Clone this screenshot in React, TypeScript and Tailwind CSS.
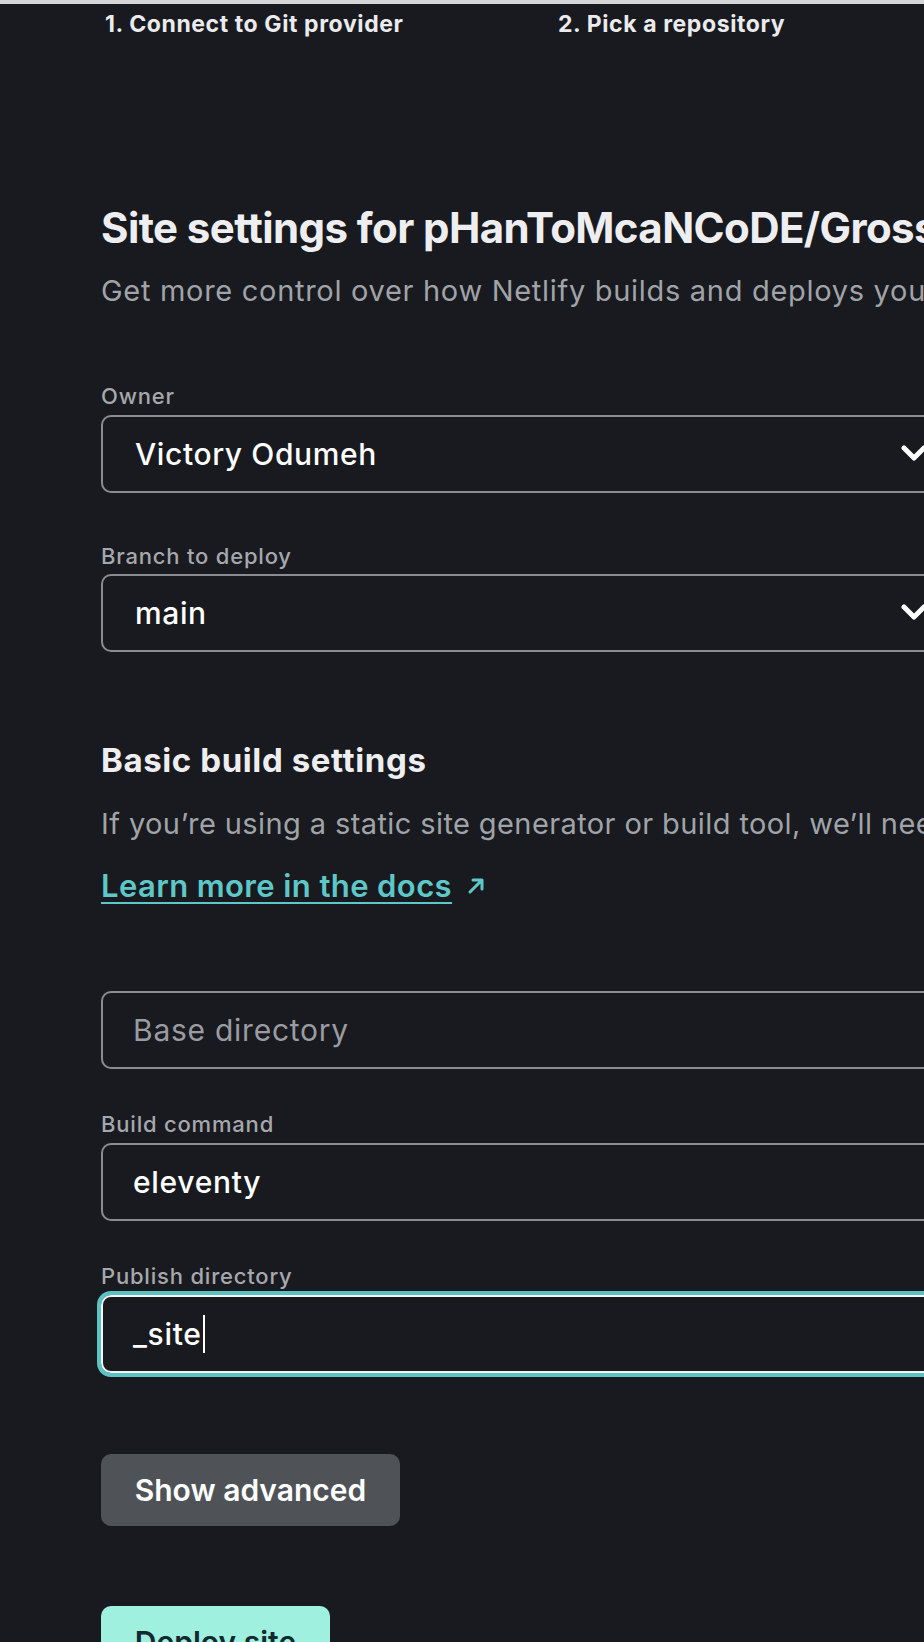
import { ReactNode } from "react";

const FONT = "font-['Inter','Liberation_Sans',sans-serif]";

function Chevron() {
  return (
    <svg width="26" height="18" viewBox="0 0 26 18" className="shrink-0">
      <polyline
        points="3,3 13,13 23,3"
        fill="none"
        stroke="#ffffff"
        strokeWidth="5"
        strokeLinecap="round"
        strokeLinejoin="round"
      />
    </svg>
  );
}

function FieldLabel({ children, className }: { children: ReactNode; className: string }) {
  return (
    <div className={`text-[22px] leading-[24px] font-medium tracking-[0.8px] text-[#a6a8ad] ${className}`}>
      {children}
    </div>
  );
}

function SelectBox({ value, className }: { value: string; className: string }) {
  return (
    <div
      className={`flex h-[78px] w-[860px] items-center justify-between rounded-[10px] border-2 border-[#8a8c91] pl-[32px] pr-[32px] ${className}`}
    >
      <span className="text-[30px] leading-[36px] font-medium tracking-[0.6px] text-white">{value}</span>
      <Chevron />
    </div>
  );
}

function TextBox({
  value,
  placeholder,
  focused,
  className,
}: {
  value?: string;
  placeholder?: string;
  focused?: boolean;
  className: string;
}) {
  const border = focused
    ? "border-2 border-[#f2f4f5] ring-4 ring-[#5cc3c4]"
    : "border-2 border-[#8a8c91]";
  return (
    <div className={`flex h-[78px] w-[860px] items-center rounded-[10px] pl-[30px] ${border} ${className}`}>
      {value ? (
        <span className="flex items-center text-[30px] leading-[36px] font-medium tracking-[0.7px] text-white">
          {value}
          {focused && <span className="ml-[1px] inline-block h-[38px] w-[2px] bg-white" />}
        </span>
      ) : (
        <span className="text-[30px] leading-[36px] tracking-[0.75px] text-[#9a9ca1]">{placeholder}</span>
      )}
    </div>
  );
}

export default function App() {
  return (
    <div className={`h-[1642px] w-[924px] overflow-hidden bg-[#181a1f] ${FONT}`}>
      <div className="h-[4px] bg-[#d6d6d8]" />

      {/* wizard steps */}
      <div className="mt-[6px] flex pl-[105px] text-[23px] leading-[28px] font-bold tracking-[0.6px] text-[#ebebed]">
        <span className="w-[453px]">1. Connect to Git provider</span>
        <span>2. Pick a repository</span>
      </div>

      <div className="pl-[101px]">
        <h1 className="mt-[164px] whitespace-nowrap text-[42px] leading-[52px] font-bold tracking-[-0.6px] text-[#eeeef0]">
          Site settings for pHanToMcaNCoDE/Grossary
        </h1>
        <p className="mt-[19px] whitespace-nowrap text-[29px] leading-[36px] tracking-[0.7px] text-[#a0a3a8]">
          Get more control over how Netlify builds and deploys your site with these settings.
        </p>

        <FieldLabel className="mt-[75px]">Owner</FieldLabel>
        <SelectBox value="Victory Odumeh" className="mt-[7px]" />

        <FieldLabel className="mt-[51px]">Branch to deploy</FieldLabel>
        <SelectBox value="main" className="mt-[6px]" />

        <h2 className="mt-[88px] text-[33px] leading-[40px] font-bold tracking-[0.6px] text-[#eeeef0]">
          Basic build settings
        </h2>
        <p className="mt-[26px] whitespace-nowrap text-[29px] leading-[36px] tracking-[0.4px] text-[#a0a3a8]">
          If you’re using a static site generator or build tool, we’ll need these settings to build your site.
        </p>
        <a
          href="#"
          className="mt-[26px] flex items-center gap-[14px] text-[31px] leading-[36px] font-semibold tracking-[0.4px] text-[#5ec7c8]"
        >
          <span className="underline decoration-2 underline-offset-[5px]">Learn more in the docs</span>
          <svg width="20" height="20" viewBox="0 0 20 20">
            <path
              d="M4 16 L16 4 M7 4 H16 V13"
              fill="none"
              stroke="#5ec7c8"
              strokeWidth="3"
              strokeLinecap="round"
              strokeLinejoin="round"
            />
          </svg>
        </a>

        <TextBox placeholder="Base directory" className="mt-[87px]" />

        <FieldLabel className="mt-[43px]">Build command</FieldLabel>
        <TextBox value="eleventy" className="mt-[7px]" />

        <FieldLabel className="mt-[43px]">Publish directory</FieldLabel>
        <TextBox value="_site" focused className="mt-[7px]" />

        <button className="mt-[81px] flex h-[72px] w-[299px] items-center justify-center rounded-[10px] bg-[#4f5358] text-[30px] font-semibold text-white">
          Show advanced
        </button>

        <button className="mt-[80px] flex h-[72px] w-[229px] items-center justify-center rounded-[10px] bg-[#a0f0df] text-[30px] font-semibold text-[#112a30]">
          Deploy site
        </button>
      </div>
    </div>
  );
}
